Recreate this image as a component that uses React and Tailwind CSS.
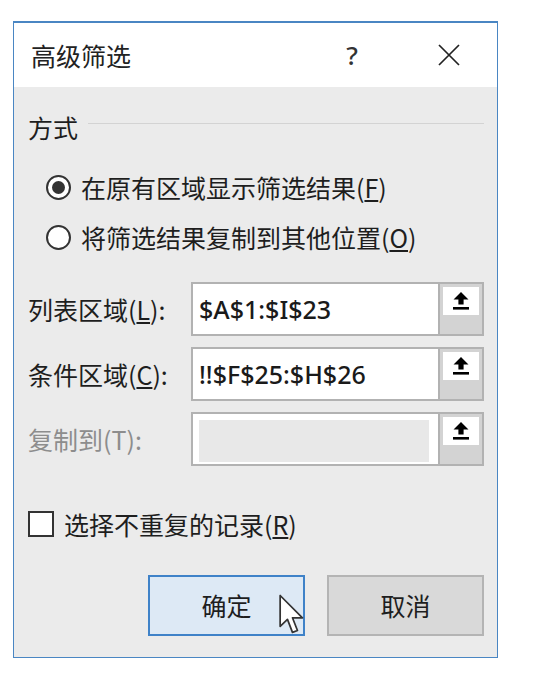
import React from 'react';

const cjk = "font-['Microsoft_YaHei','Noto_Sans_CJK_SC',sans-serif]";

function PickIcon() {
  return (
    <svg width="18" height="21" viewBox="0 0 18 21">
      <polygon points="9,1 16.5,8.5 11.6,8.5 11.6,13.5 6.4,13.5 6.4,8.5 1.5,8.5" fill="#000" />
      <rect x="1" y="16" width="16" height="2.6" fill="#000" />
    </svg>
  );
}

function RangeRow({ label, value, disabled }) {
  return (
    <div className="flex items-center h-[54px]">
      <div className={`w-[163px] text-[25px] leading-none ${disabled ? 'text-[#8d8d8d]' : 'text-[#1e1e1e]'}`}>
        {label}
      </div>
      <div className="flex-1 h-full flex border-2 border-[#b2b2b2]">
        <div className="flex-1 bg-white overflow-hidden flex items-center">
          {disabled ? (
            <div className="w-full h-full pl-[6px] pr-[9px] pt-[6px] pb-[2px]">
              <div className="w-full h-full bg-[#e8e8e8]" />
            </div>
          ) : (
            <span className="whitespace-nowrap ml-[6px] text-[25px] leading-none font-medium text-[#1a1a1a] font-['Segoe_UI','Noto_Sans',sans-serif]">
              {value}
            </span>
          )}
        </div>
        <div className="w-[44px] border-l-2 border-[#b2b2b2] bg-[#d3d3d3] p-[3px]">
          <div className="h-[28px] bg-white flex items-center justify-center">
            <PickIcon />
          </div>
        </div>
      </div>
    </div>
  );
}

function Radio({ checked, children }) {
  return (
    <div className="flex items-center h-[28px] pl-[18px]">
      <span className="w-[25px] h-[25px] rounded-full border-[2.5px] border-[#333] bg-white flex items-center justify-center">
        {checked && <span className="w-[13px] h-[13px] rounded-full bg-[#333]" />}
      </span>
      <span className="ml-[10px] text-[25px] leading-none text-[#1e1e1e]">{children}</span>
    </div>
  );
}

export default function App() {
  return (
    <div className={`min-h-screen bg-white pt-[21px] pl-[13px] ${cjk}`}>
      <div className="w-[485px] h-[637px] flex flex-col border border-t-2 border-[#4a86c3] bg-[#ebebeb]">
        {/* title bar */}
        <div className="h-[64px] bg-white flex items-center">
          <div className="flex-1 pl-[17px] text-[25px] leading-none text-[#222]">高级筛选</div>
          <div className="w-[46px] text-center text-[26px] leading-none font-medium text-[#333] font-['Segoe_UI','Noto_Sans',sans-serif]">?</div>
          <div className="w-[51px]" />
          <div className="w-[46px] flex justify-center">
            <svg width="22" height="22" viewBox="0 0 22 22">
              <path d="M1 1 L21 21 M21 1 L1 21" stroke="#222" strokeWidth="1.7" />
            </svg>
          </div>
          <div className="w-[25px]" />
        </div>

        <div className="flex-1 flex flex-col pl-[14px] pr-[13px]">
          {/* group header */}
          <div className="mt-[26px] h-[28px] flex items-center">
            <span className="text-[25px] leading-none text-[#1e1e1e]">方式</span>
            <div className="flex-1 ml-[10px] h-px bg-[#d3d3d3] -translate-y-[4px]" />
          </div>

          <div className="mt-[32px]">
            <Radio checked>
              在原有区域显示筛选结果(<span className="underline">F</span>)
            </Radio>
          </div>
          <div className="mt-[22px]">
            <Radio>
              将筛选结果复制到其他位置(<span className="underline">O</span>)
            </Radio>
          </div>

          <div className="mt-[31px] flex flex-col gap-[11px]">
            <RangeRow label={<>列表区域(<span className="underline">L</span>):</>} value="$A$1:$I$23" />
            <RangeRow label={<>条件区域(<span className="underline">C</span>):</>} value="!!$F$25:$H$26" />
            <RangeRow label="复制到(T):" disabled />
          </div>

          <div className="mt-[44px] h-[28px] flex items-center">
            <span className="w-[26px] h-[26px] border-2 border-[#333] bg-white" />
            <span className="ml-[10px] text-[25px] leading-none text-[#1e1e1e]">
              选择不重复的记录(<span className="underline">R</span>)
            </span>
          </div>

          <div className="mt-[37px] flex justify-end gap-[22px]">
            <div className="relative w-[157px] h-[61px] border-2 border-[#3f82c8] bg-[#dde9f5] flex items-center justify-center text-[25px] leading-none text-[#1e1e1e]">
              确定
              <svg className="absolute left-[129px] top-[17px]" width="25" height="43" viewBox="0 0 13 22">
                <path
                  d="M0.6 0.6 L0.6 16.6 L4.4 13 L7 19.8 L9.6 18.8 L7 12.2 L12.2 12.2 Z"
                  fill="#fff"
                  stroke="#333"
                  strokeWidth="0.9"
                  strokeLinejoin="round"
                />
              </svg>
            </div>
            <div className="w-[157px] h-[61px] border-2 border-[#b4b4b4] bg-[#d9d9d9] flex items-center justify-center text-[25px] leading-none text-[#1e1e1e]">
              取消
            </div>
          </div>
        </div>
      </div>
    </div>
  );
}
